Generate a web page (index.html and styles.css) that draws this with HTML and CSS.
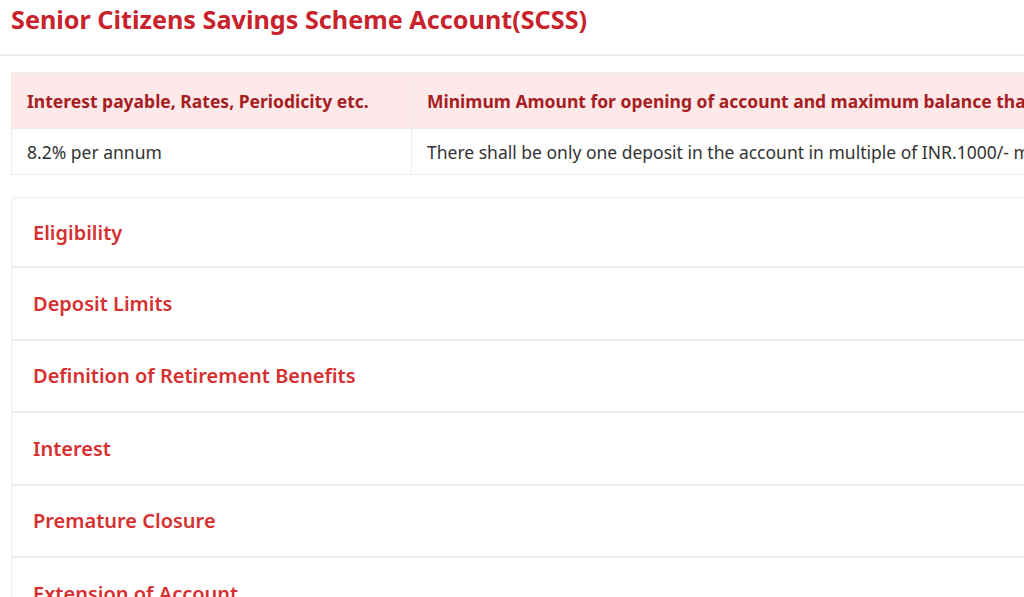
FILE: index.html
```html
<!DOCTYPE html>
<html lang="en">
<head>
<meta charset="utf-8">
<title>Senior Citizens Savings Scheme Account(SCSS)</title>
<link rel="stylesheet" href="styles.css">
</head>
<body>
<div class="page">
  <header class="title-bar">
    <h1 class="title">Senior Citizens Savings Scheme Account(SCSS)</h1>
  </header>
  <div class="content">
    <table class="rates">
      <thead>
        <tr>
          <th class="col-a">Interest payable, Rates, Periodicity etc.</th>
          <th class="col-b">Minimum Amount for opening of account and maximum balance that can be retained</th>
        </tr>
      </thead>
      <tbody>
        <tr>
          <td class="col-a">8.2% per annum</td>
          <td class="col-b">There shall be only one deposit in the account in multiple of INR.1000/- maximum not exceeding INR 30 lakh.</td>
        </tr>
      </tbody>
    </table>
    <div class="accordion">
      <div class="acc-item">Eligibility</div>
      <div class="acc-item">Deposit Limits</div>
      <div class="acc-item">Definition of Retirement Benefits</div>
      <div class="acc-item">Interest</div>
      <div class="acc-item">Premature Closure</div>
      <div class="acc-item">Extension of Account</div>
    </div>
  </div>
</div>
</body>
</html>
```

FILE: styles.css
```css
html, body {
  margin: 0;
  padding: 0;
  background: #ffffff;
  overflow: hidden;
}
body {
  font-family: "Noto Sans", "Open Sans", sans-serif;
  color: #333333;
}
.page {
  width: 1600px;
}
.title-bar {
  border-bottom: 2px solid #f0f0f0;
  padding: 1px 11px 0;
  height: 56px;
  box-sizing: border-box;
}
.title {
  margin: 0;
  font-size: 25.2px;
  font-weight: 700;
  line-height: 36px;
  color: #c8232c;
  white-space: nowrap;
}
.content {
  padding: 16px 11px 0;
}
.rates {
  border-collapse: collapse;
  width: 1500px;
  table-layout: fixed;
  border: 1px solid #ececec;
}
.rates .col-a {
  width: 400px;
  box-sizing: border-box;
}
.rates th, .rates td {
  text-align: left;
  padding: 0 15px;
  white-space: nowrap;
  overflow: hidden;
  border-right: 1px solid #ececec;
}
.rates th {
  background: #fde8ea;
  height: 55px;
  font-size: 17.5px;
  font-weight: 700;
  color: #a61e22;
  border-bottom: 1px solid #ececec;
}
.rates td {
  height: 45px;
  font-size: 17.5px;
  color: #333333;
}
.accordion {
  margin-top: 22px;
  border: 1px solid #ececec;
  border-radius: 6px;
  width: 1500px;
}
.acc-item {
  height: 70.5px;
  display: flex;
  align-items: center;
  padding: 0 21px;
  font-size: 20px;
  font-weight: 600;
  color: #d63031;
  border-bottom: 2px solid #ebebef;
}
.acc-item:first-child { height: 68px; }
.acc-item:last-child { border-bottom: none; }
```
